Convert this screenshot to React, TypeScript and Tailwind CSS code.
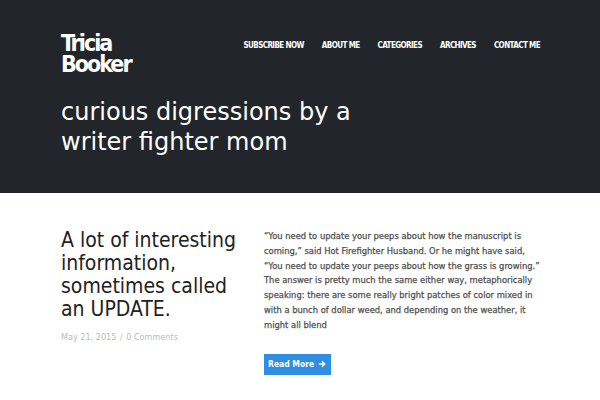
import React from "react";

const sans = { fontFamily: '"DejaVu Sans", Verdana, sans-serif' };

export default function App() {
  const nav = ["Subscribe Now", "About Me", "Categories", "Archives", "Contact Me"];
  return (
    <div className="w-[600px] h-[400px] overflow-hidden bg-white" style={sans}>
      <header className="bg-[#22262a] h-[193px] pl-[61px] pr-[60px] pt-[33px]">
        <div className="flex justify-between items-start">
          <div className="text-white font-bold text-[23px] leading-[21px] tracking-[-2px] [font-family:'DejaVu_Sans_Condensed','DejaVu_Sans',sans-serif] [font-stretch:condensed]">
            <div>Tricia</div>
            <div>Booker</div>
          </div>
          <nav className="flex gap-[18px] pt-[8px]">
            {nav.map((n) => (
              <span
                key={n}
                className="text-white font-bold uppercase text-[8px] leading-[10px] tracking-[-0.6px] whitespace-nowrap [font-family:'DejaVu_Sans_Condensed','DejaVu_Sans',sans-serif] [font-stretch:condensed]"
              >
                {n}
              </span>
            ))}
          </nav>
        </div>
        <h1 className="text-white text-[24px] leading-[29.5px] mt-[23px]">
          curious digressions by a<br />writer fighter mom
        </h1>
      </header>
      <main className="pl-[61px] pr-[56px] pt-[36px] grid grid-cols-[183px_1fr] gap-[20px] [font-family:'DejaVu_Sans_Condensed','DejaVu_Sans',sans-serif] [font-stretch:condensed]">
        <div>
          <h2 className="text-[#222] text-[21px] leading-[23px]">
            A lot of interesting information, sometimes called an UPDATE.
          </h2>
          <div className="text-[#bbb] text-[9px] mt-[10px] whitespace-nowrap">
            May 21, 2015 <span className="mx-[1px]">/</span> 0 Comments
          </div>
        </div>
        <div className="mt-[0px]">
          <p className="text-[#505050] text-[9.3px] leading-[14.8px] [-webkit-text-stroke:0.25px_#505050]">
            “You need to update your peeps about how the manuscript is coming,” said Hot Firefighter Husband. Or he might have said, “You need to update your peeps about how the grass is growing.” The answer is pretty much the same either way, metaphorically speaking: there are some really bright patches of color mixed in with a bunch of dollar weed, and depending on the weather, it might all blend
          </p>
          <button className="mt-[21px] bg-[#2f8ee2] text-white font-bold text-[8.5px] h-[21px] pl-[4px] pr-[5px] flex items-center gap-[4px] whitespace-nowrap">
            Read More
            <svg width="8" height="8" viewBox="0 0 10 10" fill="none" stroke="white" strokeWidth="1.6">
              <path d="M1 5h7M5 1.5L8.5 5 5 8.5" />
            </svg>
          </button>
        </div>
      </main>
    </div>
  );
}
